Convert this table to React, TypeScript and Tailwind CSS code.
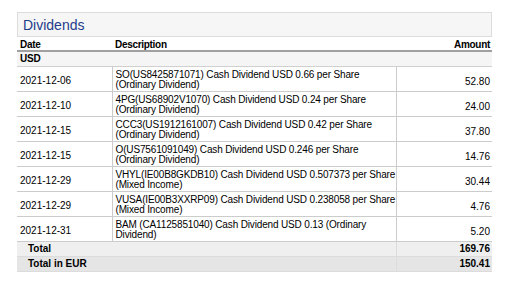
import React from "react";

const rows: { date: string; l1: string; l2: string; amt: string }[] = [
  { date: "2021-12-06", l1: "SO(US8425871071) Cash Dividend USD 0.66 per Share", l2: "(Ordinary Dividend)", amt: "52.80" },
  { date: "2021-12-10", l1: "4PG(US68902V1070) Cash Dividend USD 0.24 per Share", l2: "(Ordinary Dividend)", amt: "24.00" },
  { date: "2021-12-15", l1: "CCC3(US1912161007) Cash Dividend USD 0.42 per Share", l2: "(Ordinary Dividend)", amt: "37.80" },
  { date: "2021-12-15", l1: "O(US7561091049) Cash Dividend USD 0.246 per Share", l2: "(Ordinary Dividend)", amt: "14.76" },
  { date: "2021-12-29", l1: "VHYL(IE00B8GKDB10) Cash Dividend USD 0.507373 per Share", l2: "(Mixed Income)", amt: "30.44" },
  { date: "2021-12-29", l1: "VUSA(IE00B3XXRP09) Cash Dividend USD 0.238058 per Share", l2: "(Mixed Income)", amt: "4.76" },
  { date: "2021-12-31", l1: "BAM (CA1125851040) Cash Dividend USD 0.13 (Ordinary", l2: "Dividend)", amt: "5.20" },
];

export default function App() {
  return (
    <div className="w-[509px] h-[292px] bg-white pt-[12px] pl-[17px] text-black" style={{ fontFamily: '"Liberation Sans", Arial, sans-serif' }}>
      <div className="w-[475px]">
        <div className="h-[25px] border border-[#dcdcdc] bg-[#f6f6f6] pl-[5px] flex items-center">
          <span className="text-[14px] leading-[16px] text-[#1e3c8a] mt-[1px]">Dividends</span>
        </div>
        <table className="w-[475px] border-collapse text-[10px] table-fixed">
          <colgroup>
            <col className="w-[95px]" />
            <col className="w-[284px]" />
            <col className="w-[96px]" />
          </colgroup>
          <thead>
            <tr className="h-[14px] border-b-[2px] border-[#a0a0a0]">
              <th className="text-left font-bold pl-[3px] leading-[11px] tracking-[-0.3px] p-0 pt-[1px]">Date</th>
              <th className="text-left font-bold pl-[3px] leading-[11px] tracking-[-0.3px] p-0 pt-[1px]">Description</th>
              <th className="text-right font-bold pr-[2px] leading-[11px] tracking-[-0.3px] p-0 pt-[1px]">Amount</th>
            </tr>
          </thead>
          <tbody>
            <tr className="h-[15px] bg-[#f5f5f5] border-b border-[#d0d0d0]">
              <td colSpan={3} className="font-bold pl-[3px] leading-[11px] tracking-[-0.2px] p-0">USD</td>
            </tr>
            {rows.map((r, i) => (
              <tr key={i} className="h-[25px] border-b border-[#cccccc]">
                <td className="pl-[3px] leading-[11px] align-top pt-[8px] p-0">{r.date}</td>
                <td className="pl-[3px] leading-[10.5px] align-top pt-[3px] border-l border-r border-[#cccccc] whitespace-nowrap tracking-[-0.15px] p-0">
                  {r.l1}
                  <br />
                  {r.l2}
                </td>
                <td className="text-right pr-[2px] leading-[11px] align-top pt-[9px] p-0">{r.amt}</td>
              </tr>
            ))}
            <tr className="h-[15px] bg-[#efefef] border-b border-[#dcdcdc] font-bold">
              <td colSpan={2} className="pl-[11px] leading-[11px] p-0">Total</td>
              <td className="text-right pr-[2px] leading-[11px] border-l border-[#dcdcdc] p-0">169.76</td>
            </tr>
            <tr className="h-[15px] bg-[#e5e5e5] border-b border-[#dcdcdc] font-bold">
              <td colSpan={2} className="pl-[11px] leading-[11px] p-0">Total in EUR</td>
              <td className="text-right pr-[2px] leading-[11px] border-l border-[#dcdcdc] p-0">150.41</td>
            </tr>
          </tbody>
        </table>
      </div>
    </div>
  );
}
